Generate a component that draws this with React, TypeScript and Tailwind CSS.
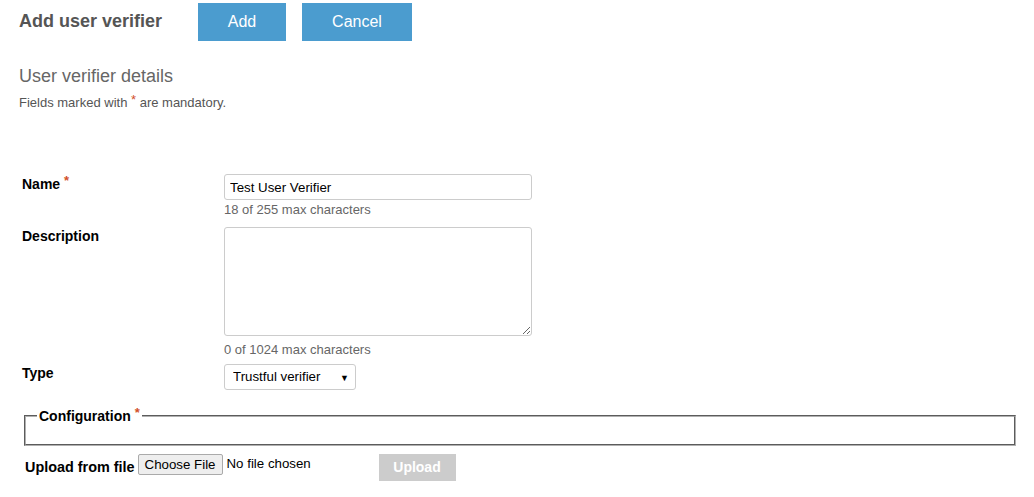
import React from 'react';

const Req = () => <span className="text-[#d2502a] text-[13px] align-top relative -top-[3px]">*</span>;

export default function App() {
    return (
        <div className="bg-white min-h-screen text-black" style={{ fontFamily: '"Liberation Sans", Arial, sans-serif' }}>
            <div className="flex items-start h-[44px] pt-[3px] pl-[19px]">
                <h1 className="text-[18px] font-bold text-[#555] w-[179px] leading-[36px]">Add user verifier</h1>
                <div className="flex gap-4">
                    <button className="w-[88px] h-[38px] bg-[#4b9ccf] text-white text-[16px]">Add</button>
                    <button className="w-[110px] h-[38px] bg-[#4b9ccf] text-white text-[16px]">Cancel</button>
                </div>
            </div>

            <div className="pl-[19px] pt-[21px]">
                <h2 className="text-[18px] text-[#666] leading-[22px]">User verifier details</h2>
                <p className="text-[13px] text-[#555] mt-[8px] leading-[16px]">Fields marked with <Req /> are mandatory.</p>
            </div>

            <div className="pl-[22px] pt-[63px] grid grid-cols-[202px_308px]">
                <div className="text-[14px] font-bold pt-[2px] leading-[16px]">Name <Req /></div>
                <div>
                    <input defaultValue="Test User Verifier" className="w-[308px] h-[26px] border border-[#ccc] rounded-[3px] px-[5px] text-[13.3px] outline-none" />
                    <div className="text-[13px] text-[#666] leading-[16px] mt-[2px]">18 of 255 max characters</div>
                </div>

                <div className="text-[14px] font-bold pt-[1px] mt-[9px] leading-[16px]">Description</div>
                <div className="mt-[9px]">
                    <textarea className="w-[308px] h-[109px] border border-[#ccc] rounded-[3px] block outline-none" />
                    <div className="text-[13px] text-[#666] leading-[16px] mt-[6px]">0 of 1024 max characters</div>
                </div>

                <div className="text-[14px] font-bold pt-[1px] mt-[6px] leading-[16px]">Type</div>
                <div className="mt-[6px]">
                    <div className="relative w-[132px] h-[26px]">
                        <select className="appearance-none w-full h-full border border-[#ccc] rounded-[3px] pl-[8px] text-[13.3px] bg-white outline-none">
                            <option>Trustful verifier</option>
                        </select>
                        <span className="absolute right-[7px] top-[8px] text-[9px] pointer-events-none">▼</span>
                    </div>
                </div>
            </div>

            <fieldset className="ml-[24px] mr-[18px] mt-[18px] border-2 border-[#b0b0b0] h-[38px] px-[11px]" style={{ borderStyle: 'groove' }}>
                <legend className="text-[14px] font-bold px-[2px] leading-[16px]">Configuration <Req /></legend>
            </fieldset>

            <div className="flex items-center pl-[25px] mt-[4px]">
                <span className="text-[14.4px] font-bold mr-[3px] mt-[5px]">Upload from file</span>
                <button className="h-[21px] px-[6px] border border-[#aaa] bg-[#eee] rounded-[2px] text-[13.3px] leading-[19px] mt-[-3px]">Choose File</button>
                <span className="text-[13.3px] ml-[4px] w-[152px] mt-[-3px]">No file chosen</span>
                <button className="w-[77px] h-[27px] bg-[#ccc] text-white font-bold text-[14px] mt-[4px]">Upload</button>
            </div>
        </div>
    );
}
